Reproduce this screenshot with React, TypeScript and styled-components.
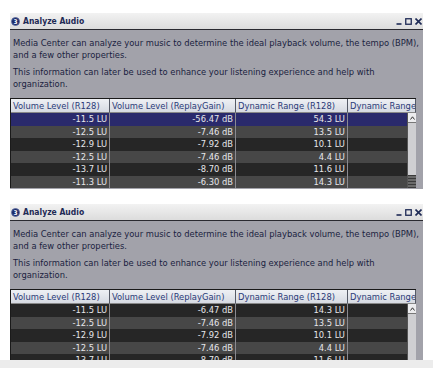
import React from 'react';
import styled, { createGlobalStyle } from 'styled-components';

const GlobalStyle = createGlobalStyle`
  html, body {
    margin: 0;
    padding: 0;
    background: #ffffff;
  }
  body {
    font-family: 'DejaVu Sans Condensed', 'DejaVu Sans', sans-serif;
    font-size: 9px;
  }
`;

const Page = styled.div`
  width: 433px;
  height: 368px;
  overflow: hidden;
  display: flex;
  flex-direction: column;
  gap: 15px;
  padding: 13px 0 0 10px;
  box-sizing: border-box;
  background: linear-gradient(#ffffff 360px, #ececec 360px);
`;

const Window = styled.div<{ $height: number }>`
  width: 413px;
  height: ${(p) => p.$height}px;
  overflow: hidden;
  display: flex;
  flex-direction: column;
  background: #a2a2aa;
  flex-shrink: 0;
`;

const TitleBar = styled.div`
  height: 16px;
  display: flex;
  align-items: center;
  gap: 3px;
  padding: 0 1px 0 1px;
  background: linear-gradient(#f2f2f2, #dcdcdc);
  border-bottom: 1px solid #2a2a30;
  flex-shrink: 0;
`;

const TitleText = styled.span`
  flex: 1;
  color: #1e2a55;
  font-size: 8.5px;
  font-weight: bold;
`;

const Controls = styled.div`
  display: flex;
  align-items: center;
  gap: 3px;
  color: #1e2a55;
`;

const Body = styled.div`
  padding: 7px 0 0 3px;
  color: #1a1e40;
  font-size: 9.3px;
  line-height: 12px;
  display: flex;
  flex-direction: column;
  gap: 5px;
`;

const Para = styled.p`
  margin: 0;
`;

const Table = styled.div`
  margin-top: 8px;
  width: 405px;
  border-top: 1px solid #1a1a1a;
  border-left: 1px solid #1a1a1a;
  position: relative;
`;

const Grid = styled.div`
  display: grid;
  grid-template-columns: 99px 126px 112px 68px;
`;

const HeadCell = styled.div`
  height: 13px;
  line-height: 13px;
  padding: 0 2px;
  color: #2a3a78;
  background: linear-gradient(#eef0f4, #d6dae2);
  border-right: 1px solid #555a66;
  border-bottom: 1px solid #888;
  white-space: nowrap;
  overflow: hidden;
  font-size: 9.3px;
  &:last-child {
    padding: 0 0 0 2px;
    font-size: 8.7px;
  }
`;

const Cell = styled.div<{ $tone: 'sel' | 'dark' | 'light' }>`
  height: 12.5px;
  line-height: 12.5px;
  padding: 0 2px;
  text-align: right;
  color: #e6e6ea;
  white-space: nowrap;
  font-size: 9.3px;
  background: ${(p) => (p.$tone === 'sel' ? '#2a2a6c' : p.$tone === 'dark' ? '#262626' : '#474747')};
  border-right: 1px solid #8a8a90;
`;

const ScrollBar = styled.div`
  position: absolute;
  right: 0;
  top: 14px;
  bottom: 0;
  width: 8px;
  background: #cfcfd2;
  border-left: 1px solid #555;
  display: flex;
  flex-direction: column;
`;

const ScrollUp = styled.div`
  height: 9px;
  background: #ececee;
  border-bottom: 1px solid #777;
  display: flex;
  align-items: center;
  justify-content: center;
`;

const ScrollTrack = styled.div`
  height: 52px;
  flex-shrink: 0;
`;

const ScrollGrip = styled.div`
  flex: 1;
  background: repeating-linear-gradient(#3a3a3a 0 1px, #6a6a6a 1px 3px);
`;

const headers = ['Volume Level (R128)', 'Volume Level (ReplayGain)', 'Dynamic Range (R128)', 'Dynamic Range'];

type Row = [string, string, string];

const topRows: Row[] = [
  ['-11.5 LU', '-56.47 dB', '54.3 LU'],
  ['-12.5 LU', '-7.46 dB', '13.5 LU'],
  ['-12.9 LU', '-7.92 dB', '10.1 LU'],
  ['-12.5 LU', '-7.46 dB', '4.4 LU'],
  ['-13.7 LU', '-8.70 dB', '11.6 LU'],
  ['-11.3 LU', '-6.30 dB', '14.3 LU'],
];

const bottomRows: Row[] = [
  ['-11.5 LU', '-6.47 dB', '14.3 LU'],
  ['-12.5 LU', '-7.46 dB', '13.5 LU'],
  ['-12.9 LU', '-7.92 dB', '10.1 LU'],
  ['-12.5 LU', '-7.46 dB', '4.4 LU'],
  ['-13.7 LU', '-8.70 dB', '11.6 LU'],
];

const AppIcon = () => (
  <svg width="9" height="9" viewBox="0 0 9 9">
    <circle cx="4.5" cy="4.5" r="4" fill="#1c2c6a" stroke="#5a6aa0" strokeWidth="0.8" />
    <text x="4.6" y="7" fontSize="6.5" fill="#ffffff" textAnchor="middle" fontWeight="bold">
      3
    </text>
  </svg>
);

const AnalyzeWindow: React.FC<{ height: number; rows: Row[]; selected?: boolean }> = ({ height, rows, selected }) => (
  <Window $height={height}>
    <TitleBar>
      <AppIcon />
      <TitleText>Analyze Audio</TitleText>
      <Controls>
        <svg width="6" height="7" viewBox="0 0 6 7">
          <path d="M0.5 6 L5.5 6" stroke="#1e2a55" strokeWidth="1.6" />
        </svg>
        <svg width="7" height="7" viewBox="0 0 7 7">
          <rect x="0.75" y="0.75" width="5.5" height="5.5" fill="none" stroke="#1e2a55" strokeWidth="1.3" />
        </svg>
        <svg width="7" height="7" viewBox="0 0 7 7">
          <path d="M0.5 0.5 L6.5 6.5 M6.5 0.5 L0.5 6.5" stroke="#1e2a55" strokeWidth="1.6" />
        </svg>
      </Controls>
    </TitleBar>
    <Body>
      <Para>
        Media Center can analyze your music to determine the ideal playback volume, the tempo (BPM), and a few other
        properties.
      </Para>
      <Para>This information can later be used to enhance your listening experience and help with organization.</Para>
    </Body>
    <Table>
      <Grid>
        {headers.map((h) => (
          <HeadCell key={h}>{h}</HeadCell>
        ))}
        {rows.map((r, i) => {
          const tone = selected && i === 0 ? 'sel' : i % 2 === 0 ? 'dark' : 'light';
          return (
            <React.Fragment key={i}>
              {r.map((v, j) => (
                <Cell key={j} $tone={tone}>
                  {v}
                </Cell>
              ))}
              <Cell $tone={tone} />
            </React.Fragment>
          );
        })}
      </Grid>
      <ScrollBar>
        <ScrollUp>
          <svg width="5" height="4" viewBox="0 0 5 4">
            <path d="M0.5 3.5 L2.5 0.8 L4.5 3.5" fill="none" stroke="#333" strokeWidth="1" />
          </svg>
        </ScrollUp>
        <ScrollTrack />
        <ScrollGrip />
      </ScrollBar>
    </Table>
  </Window>
);

const App: React.FC = () => (
  <>
    <GlobalStyle />
    <Page>
      <AnalyzeWindow height={176} rows={topRows} selected />
      <AnalyzeWindow height={156} rows={bottomRows} />
    </Page>
  </>
);

export default App;
